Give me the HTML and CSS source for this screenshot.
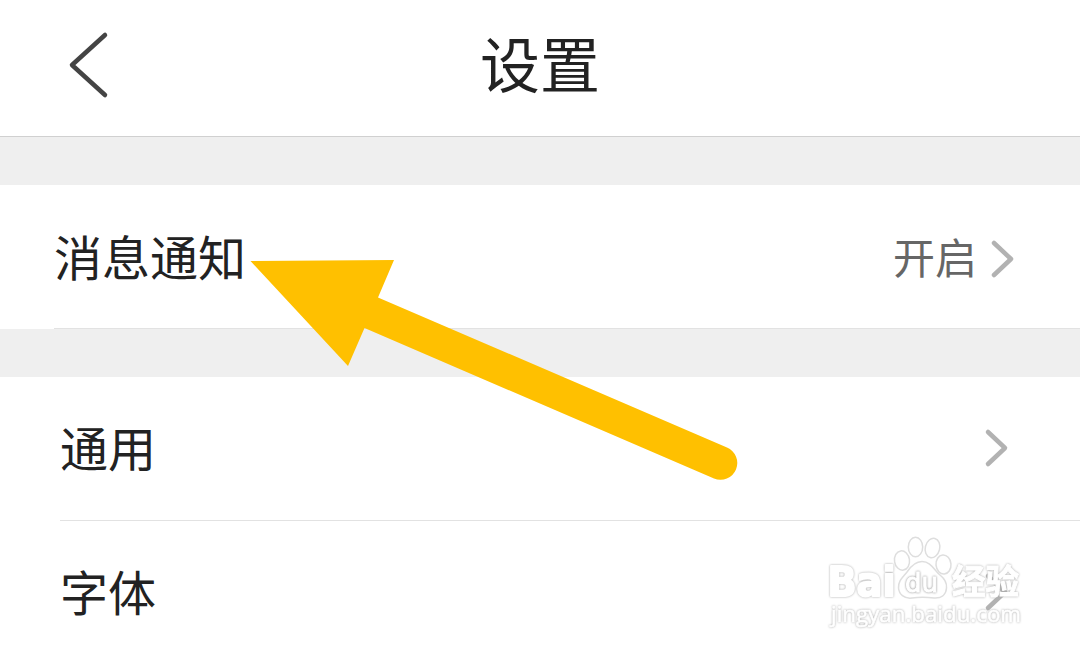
FILE: index.html
```html
<!DOCTYPE html>
<html lang="zh-CN">

<head>
  <meta charset="UTF-8">
  <title>设置</title>
  <link rel="stylesheet" href="styles.css">
</head>

<body>
  <header class="topbar">
    <svg class="back" width="48" height="70" viewBox="0 0 48 70">
      <path d="M41 5 L8 35 L41 65" />
    </svg>
    <h1>设置</h1>
  </header>

  <main>
    <section class="group first">
      <div class="row">
        <span class="label">消息通知</span>
        <span class="value">开启</span>
        <svg class="chevron" width="26" height="40" viewBox="0 0 26 40">
          <path d="M4 4 L21 20 L4 36" />
        </svg>
      </div>
    </section>

    <section class="group">
      <div class="row">
        <span class="label">通用</span>
        <svg class="chevron" width="26" height="40" viewBox="0 0 26 40">
          <path d="M4 4 L21 20 L4 36" />
        </svg>
      </div>
      <div class="row">
        <span class="label">字体</span>
        <svg class="chevron" width="26" height="40" viewBox="0 0 26 40">
          <path d="M4 4 L21 20 L4 36" />
        </svg>
      </div>
    </section>
  </main>

  <svg class="pointer" width="500" height="230" viewBox="0 0 500 230">
    <path d="M0.5 11 L144 10 L128 47.5 L477 197.500 A16.5 16.5 0 0 1 464 228.5 L114.500 78 L98 116 Z" />
  </svg>

  <svg class="watermark" width="210" height="110" viewBox="820 530 210 110">
    <g class="paw">
      <ellipse cx="902" cy="560.500" rx="7.500" ry="9.700" transform="rotate(-8 902 560.500)" />
      <ellipse cx="915.500" cy="547" rx="7.200" ry="9.800" />
      <ellipse cx="932.500" cy="548" rx="7.200" ry="9.800" transform="rotate(14 932.500 548)" />
      <ellipse cx="943.500" cy="564.500" rx="7.500" ry="9.500" transform="rotate(-5 943.500 564.500)" />
      <path d="M922 561.500 C931 561.500 934 570 940 575 C945 579 947 583 946.500 588 C946 595 941 598.500 934 598 C926 597 919 597 912 598 C904 599 899 594 898.500 588 C898 581 903 577 907 572 C911 566 915 561.500 922 561.500 Z" />
    </g>
    <text class="bai" x="827.500" y="595.500" textLength="68" lengthAdjust="spacingAndGlyphs">Bai</text>
    <text class="du" x="905" y="592" textLength="33" lengthAdjust="spacingAndGlyphs">du</text>
    <text class="jy" x="952" y="594" textLength="67" lengthAdjust="spacingAndGlyphs">经验</text>
    <text class="site" x="831" y="622" textLength="190" lengthAdjust="spacingAndGlyphs">jingyan.baidu.com</text>
  </svg>
</body>

</html>
```

FILE: styles.css
```css
* {
  box-sizing: border-box;
}

body {
  position: relative;
  height: 652px;
  margin: 0;
  overflow: hidden;
  background: #efefef;
  color: #222;
  font-family: "Noto Sans CJK SC", sans-serif;
}

.topbar {
  display: grid;
  grid-template-columns: 1fr auto 1fr;
  align-items: center;
  height: 137px;
  padding: 0 64px 7px;
  background: #fff;
  border-bottom: 1px solid #d0d0d0;
}

.back {
  fill: none;
  stroke: #444;
  stroke-width: 4.5;
  stroke-linecap: round;
  stroke-linejoin: round;
}

h1 {
  margin: 0 0 6px;
  font-size: 60px;
  font-weight: 400;
  line-height: 80px;
}

.group {
  margin-top: 48px;
  padding-left: 60px;
  background: #fff;
}

.row {
  display: flex;
  align-items: center;
  height: 144px;
  padding: 0 70px 2px 0;
  border-bottom: 1px solid #e2e2e2;
}

.first {
  padding-left: 54px;
}

.first .row {
  padding-right: 64px;
}

.label {
  flex: 1;
  margin-bottom: 4px;
  font-size: 48px;
  line-height: 64px;
}

.first .label {
  margin-bottom: 2px;
}

.value {
  margin-right: 13px;
  color: #666;
  font-size: 42px;
  line-height: 60px;
}

.chevron {
  fill: none;
  stroke: #b2b2b2;
  stroke-width: 4.5;
  stroke-linecap: round;
  stroke-linejoin: round;
}

.first .chevron {
  margin-top: 6px;
}

.pointer {
  position: absolute;
  left: 250px;
  top: 250px;
  fill: #ffc000;
}

.watermark {
  position: absolute;
  left: 820px;
  top: 530px;
  fill: #fff;
  stroke: #dedede;
  stroke-width: 1.5;
  stroke-linejoin: round;
}

/* white lettering, only its thin grey halo shows on white */
.watermark text {
  stroke: #fff;
  stroke-width: 1;
  filter: drop-shadow(0 0 0.8px #aaa);
}

.watermark .bai {
  font: 700 40px "DejaVu Sans", sans-serif;
  stroke-width: 2;
}

.watermark .du {
  font: 400 27px "DejaVu Sans", sans-serif;
  filter: drop-shadow(0 0 0.8px #888);
}

.jy {
  font: 700 34px "Noto Sans CJK SC", sans-serif;
}

.watermark .site {
  font: 400 21.5px "Open Sans", sans-serif;
  stroke-width: 0.6;
}
```
